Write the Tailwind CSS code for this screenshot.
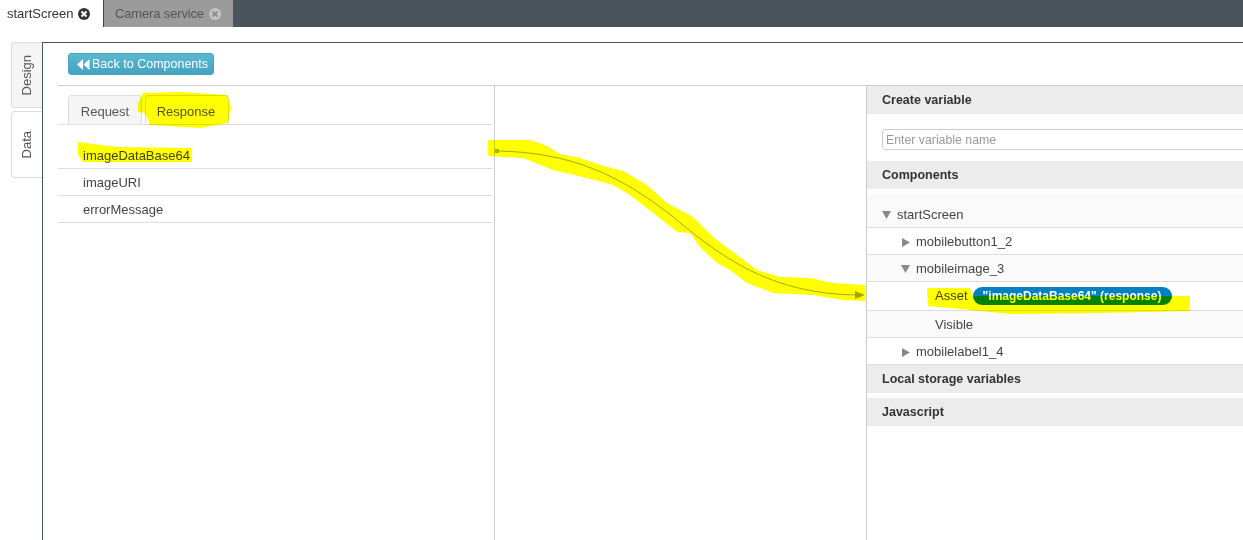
<!DOCTYPE html>
<html lang="en">
<head>
  <meta charset="UTF-8">
  <title>startScreen</title>
  <script src="https://cdn.jsdelivr.net/npm/@tailwindcss/browser@4"></script>
</head>
<body class="bg-white font-['Liberation_Sans',Arial,sans-serif] text-[13px] text-[#444]">
  <div class="relative w-[1243px] h-[540px] overflow-hidden flex flex-col">

    <!-- Top tabs -->
    <div class="h-[27px] shrink-0 flex bg-[#4a525c]">
      <div class="w-[103px] bg-white flex items-center pl-[7px] gap-[5px] text-[#333] text-[13px]">
        <span>startScreen</span>
        <svg class="w-3 h-3" viewBox="0 0 12 12"><circle cx="6" cy="6" r="6" fill="#333"/><path d="M3.500 3.500l5 5M8.500 3.500l-5 5" stroke="#fff" stroke-width="2"/></svg>
      </div>
      <div class="w-[130px] bg-[#9b9b9b] border-l border-[#444] flex items-center pl-[11px] gap-[5px] text-[#555] text-[13px]">
        <span class="tracking-[-0.15px]">Camera service</span>
        <svg class="w-3 h-3" viewBox="0 0 12 12"><circle cx="6" cy="6" r="6" fill="#c4c4c4"/><path d="M3.500 3.500l5 5M8.500 3.500l-5 5" stroke="#8f8f8f" stroke-width="2"/></svg>
      </div>
    </div>

    <div class="flex flex-1 pt-[15px] min-h-0">
      <!-- Side tabs -->
      <div class="w-[42px] shrink-0 pl-[11px] flex flex-col gap-[3px]">
        <div class="h-[66px] bg-[#f5f5f5] border border-r-0 border-[#ddd] rounded-l flex items-center justify-center text-[#555]">
          <span class="[writing-mode:vertical-rl] rotate-180">Design</span>
        </div>
        <div class="h-[67px] bg-white border border-r-0 border-[#ddd] rounded-l flex items-center justify-center text-[#555]">
          <span class="[writing-mode:vertical-rl] rotate-180">Data</span>
        </div>
      </div>

      <!-- Main panel -->
      <div class="flex-1 min-w-0 flex flex-col border-l border-t border-[#4a525c]">
        <div class="h-[43px] shrink-0 ml-[15px] border-b border-[#ccc] flex items-center pl-[10px]">
          <button class="w-[146px] h-[22px] rounded-[3px] border border-[#4aa3bf] bg-gradient-to-b from-[#5bb8d3] to-[#42a3c1] text-white text-[12.500px] flex items-center pl-2 gap-[2px] whitespace-nowrap">
            <svg class="w-[13px] h-[11px] shrink-0" viewBox="0 0 13 11" fill="#fff"><path d="M6 0v11L0 5.500zM12.500 0v11L6.500 5.500z"/></svg>
            <span>Back to Components</span>
          </button>
        </div>

        <div class="flex flex-1 min-h-0">
          <!-- Left: request/response -->
          <div class="w-[452px] shrink-0 border-r border-[#ccc] pl-[15px] pr-px">
            <div class="h-[39px] border-b border-[#ddd] flex items-end pl-[10px] gap-[3px]">
              <div class="w-[74px] h-[29px] pt-1 bg-[#f5f5f5] border border-b-0 border-[#ddd] rounded-t flex items-center justify-center text-[#555]">Request</div>
              <div class="w-[84px] h-[29px] pt-1 pr-[2px] bg-white border border-b-0 border-[#ddd] rounded-t flex items-center justify-center text-[#555]">Response</div>
            </div>
            <div class="pt-[17px]">
              <div class="h-[27px] pt-[2px] border-b border-[#ddd] pl-[25px] flex items-center">imageDataBase64</div>
              <div class="h-[27px] pt-[2px] border-b border-[#ddd] pl-[25px] flex items-center">imageURI</div>
              <div class="h-[27px] pt-[2px] border-b border-[#ddd] pl-[25px] flex items-center">errorMessage</div>
            </div>
          </div>

          <!-- Middle: connector space -->
          <div class="w-[372px] shrink-0 border-r border-[#ccc]"></div>

          <!-- Right: variables -->
          <div class="flex-1 min-w-0 overflow-hidden">
            <div class="h-[28px] bg-[#ececec] pl-[15px] flex items-center font-bold text-[12.500px] text-[#333]">Create variable</div>
            <div class="h-[47px] pl-[15px] pt-[15px]">
              <input type="text" placeholder="Enter variable name" class="w-[400px] h-[21px] border border-[#ccc] rounded-l px-[3px] text-[12.300px] placeholder:text-[#999] outline-none">
            </div>
            <div class="h-[28px] bg-[#ececec] pl-[15px] flex items-center font-bold text-[12.500px] text-[#333]">Components</div>
            <div class="mt-[5px]">
              <div class="h-[34px] pt-[8px] bg-[#fafafa] border-b border-[#ddd] pl-[15px] flex items-center gap-[6px]">
                <svg class="w-[9px] h-2" viewBox="0 0 9 8" fill="#888"><path d="M0 0h9L4.500 8z"/></svg>
                <span>startScreen</span>
              </div>
              <div class="h-[27px] pt-[2px] bg-white border-b border-[#ddd] pl-[35px] flex items-center gap-[6px]">
                <svg class="w-2 h-[9px]" viewBox="0 0 8 9" fill="#888"><path d="M0 0v9l8-4.500z"/></svg>
                <span>mobilebutton1_2</span>
              </div>
              <div class="h-[27px] pt-[2px] bg-[#fafafa] border-b border-[#ddd] pl-[34px] flex items-center gap-[6px]">
                <svg class="w-[9px] h-2" viewBox="0 0 9 8" fill="#888"><path d="M0 0h9L4.500 8z"/></svg>
                <span>mobileimage_3</span>
              </div>
              <div class="h-[29px] bg-white border-b border-[#ddd] pl-[68px] flex items-center gap-[5px]">
                <span>Asset</span>
                <span class="w-[199px] h-[18px] rounded-full bg-[#0081c2] text-white font-bold text-[12px] flex items-center justify-center">"imageDataBase64" (response)</span>
              </div>
              <div class="h-[27px] pt-[2px] bg-[#fafafa] border-b border-[#ddd] pl-[68px] flex items-center">Visible</div>
              <div class="h-[27px] pt-[2px] bg-white border-b border-[#ddd] pl-[35px] flex items-center gap-[6px]">
                <svg class="w-2 h-[9px]" viewBox="0 0 8 9" fill="#888"><path d="M0 0v9l8-4.500z"/></svg>
                <span>mobilelabel1_4</span>
              </div>
            </div>
            <div class="h-[28px] bg-[#ececec] pl-[15px] flex items-center font-bold text-[12.500px] text-[#333]">Local storage variables</div>
            <div class="h-[28px] mt-[5px] bg-[#ececec] pl-[15px] flex items-center font-bold text-[12.500px] text-[#333]">Javascript</div>
          </div>
        </div>
      </div>
    </div>

    <!-- Marker highlights and connector drawn over the page -->
    <svg class="absolute inset-0 pointer-events-none mix-blend-multiply" width="1243" height="540" viewBox="0 0 1243 540">
      <g fill="#ffff00">
        <polygon points="138,103 143,93 180,92 227,95 231,107 228,123 200,128 150,125 145,113 138,112"/>
        <polygon points="78,142 117,147 191,148 192,162 83,162 78,155"/>
        <polygon points="488,140 530,140 547,146 560,154 580,158 600,165 623,171 647,185 667,203 693,217 713,237 737,255 757,270 780,277 810,278 833,283 865,285 865,301 843,300 813,295 773,293 747,283 730,270 717,263 700,247 690,233 677,232 653,213 630,195 613,185 587,178 553,170 523,158 488,156"/>
        <polygon points="927,288 970,288 972,296 1190,296 1190,311 1100,313 1010,314 960,309 928,306"/>
      </g>
      <path d="M497 151C570 152 620 175 672 216C720 256 770 295 860 295" fill="none" stroke="#a8a800" stroke-width="1"/>
      <rect x="495" y="149" width="4" height="4" fill="#b0b000"/>
      <path d="M855 291l10 4-10 4z" fill="#a5a500"/>
    </svg>
  </div>
</body>
</html>
